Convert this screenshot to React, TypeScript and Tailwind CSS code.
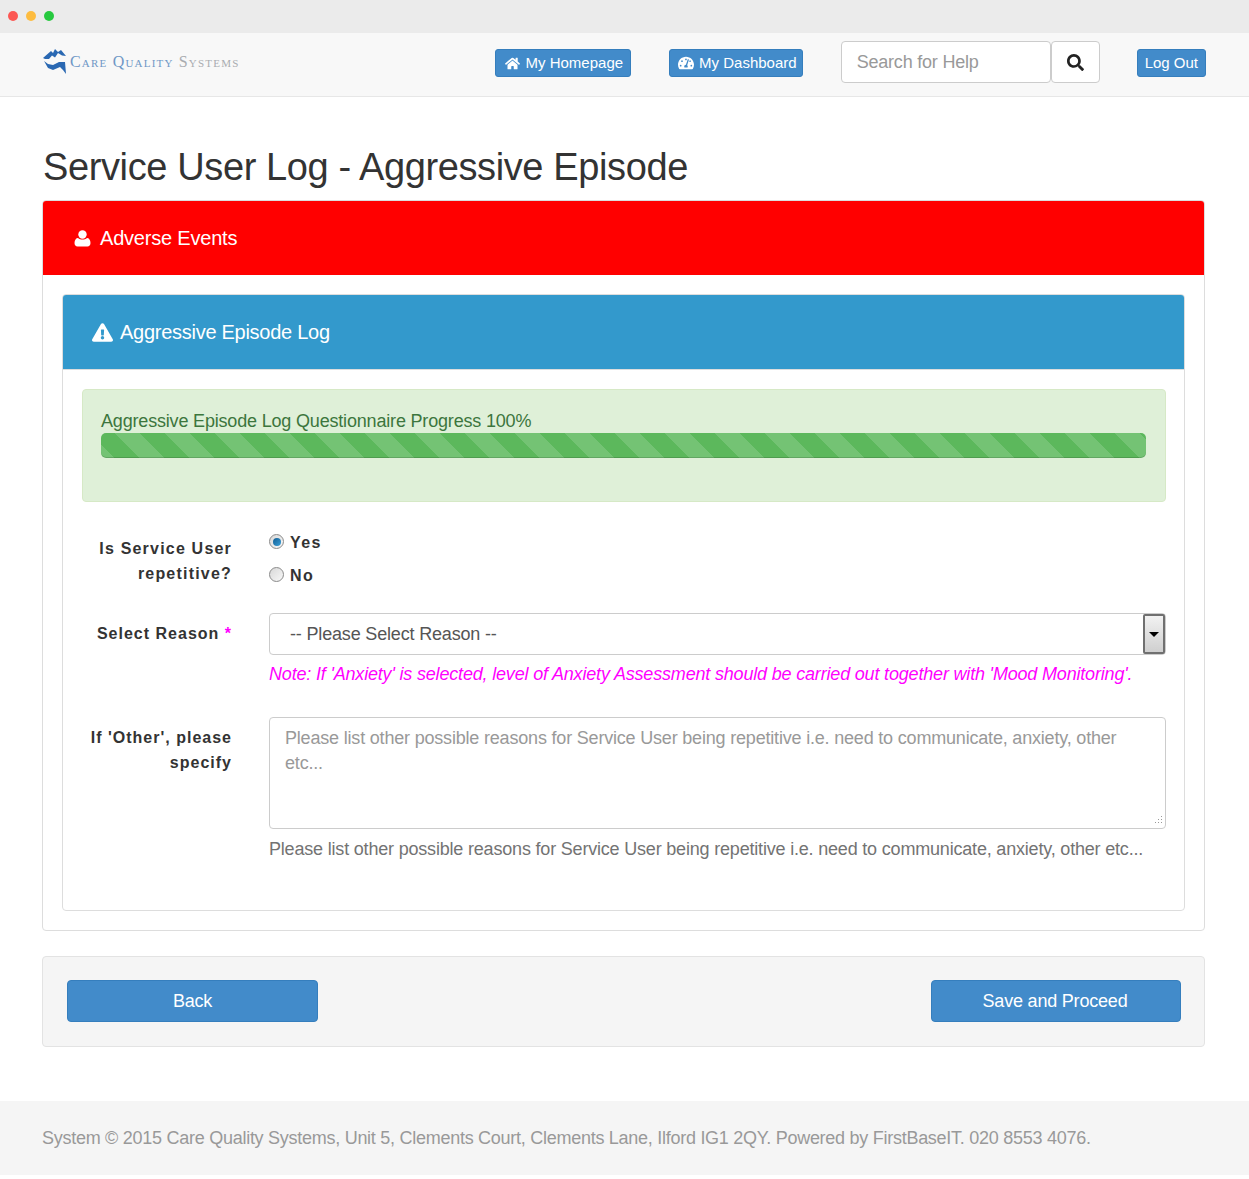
import React from 'react';
import { FaHome, FaTachometerAlt, FaSearch, FaExclamationTriangle } from 'react-icons/fa';

const Logo = () => (
    <div className="flex items-center gap-[3px]">
        <svg width="25" height="28" viewBox="0 0 25 28" className="text-[#2a68b2]">
            <path fill="currentColor" d="M1 10 L9 3 L11 5 L13 1 L16 4 L19 2 L24 8 L20 7.500 L16 5 L13 9.500 L10 7.500 L7 11 L3 11 Z" />
            <path fill="currentColor" d="M2 13 L6 16 L11 17 L17 14 L23 14 L24 26 L21 22 L18 19 L11 22 L6 20 Z" />
        </svg>
        <span className="font-['Liberation_Serif',serif] text-[16px] [font-variant:small-caps] tracking-[1.2px] text-[#6f97c6] whitespace-nowrap">
            Care Quality <span className="text-[#a9acb0]">Systems</span>
        </span>
    </div>
);

const UserIcon = () => (
    <svg width="17" height="17" viewBox="0 0 17 17" fill="currentColor">
        <circle cx="8.500" cy="4.500" r="4.200" />
        <path d="M0.500 13c0-3 1.500-5 3.500-5 1.200 1 2.800 1.500 4.500 1.500S11.800 9 13 8c2 0 3.500 2 3.500 5 0 2.200-1.300 3.500-3 3.500h-10c-1.700 0-3-1.300-3-3.500z" />
    </svg>
);

const Radio = ({ checked, label }: { checked?: boolean; label: string }) => (
    <label className="flex items-center gap-[6px] h-[33px]">
        <span className="w-[15px] h-[15px] -mt-[2px] rounded-full border border-[#8a8a8a] bg-gradient-to-br from-[#d8d8d8] to-[#f8f8f8] flex items-center justify-center">
            {checked && <span className="w-[8px] h-[8px] rounded-full bg-gradient-to-br from-[#0f5d94] to-[#3aa0d8]" />}
        </span>
        <span className="text-[#333] font-bold tracking-[1.400px] text-[16px]">{label}</span>
    </label>
);

const FieldLabel = ({ children }: { children: React.ReactNode }) => (
    <div className="w-[150px] text-right font-bold text-[#333] text-[16px] leading-[25px] tracking-[1px] shrink-0">{children}</div>
);

export default function App() {
    return (
        <div className="min-h-[1179px] bg-white font-['Liberation_Sans',Arial,sans-serif] text-[#333]">
            {/* window bar */}
            <div className="h-[33px] bg-[#ebebeb] flex items-center gap-[8px] pl-[8px] pb-[1px]">
                <span className="w-[10px] h-[10px] rounded-full bg-[#fc5753]" />
                <span className="w-[10px] h-[10px] rounded-full bg-[#fdbc40]" />
                <span className="w-[10px] h-[10px] rounded-full bg-[#27c93f]" />
            </div>

            <nav className="h-[64px] bg-[#f8f8f8] border-b border-[#e7e7e7] flex items-center pl-[42px] pr-[43px] pb-[5px]">
                <Logo />
                <div className="ml-auto flex items-center">
                    <button className="mt-[2px] h-[28px] pl-[9px] pr-[7px] flex items-center gap-[6px] bg-[#428bca] border border-[#357ebd] rounded-[3px] text-white text-[15px] whitespace-nowrap">
                        <FaHome className="w-[15px] h-[15px]" />
                        My Homepage
                    </button>
                    <button className="mt-[2px] ml-[38px] h-[28px] pl-[8px] pr-[5px] flex items-center gap-[5px] bg-[#428bca] border border-[#357ebd] rounded-[3px] text-white text-[15px] whitespace-nowrap">
                        <FaTachometerAlt className="w-[16px] h-[16px]" />
                        My Dashboard
                    </button>
                    <div className="ml-[38px] flex items-center">
                        <div className="w-[210px] h-[42px] bg-white border border-[#ccc] rounded-[4px] pl-[15px] flex items-center text-[18px] tracking-[-0.2px] text-[#999]">
                            Search for Help
                        </div>
                        <button className="w-[49px] h-[42px] bg-white border border-[#ccc] rounded-[4px] flex items-center justify-center text-[#222]">
                            <FaSearch className="w-[17px] h-[17px]" />
                        </button>
                    </div>
                    <button className="mt-[2px] ml-[37px] h-[28px] px-[7px] flex items-center bg-[#428bca] border border-[#357ebd] rounded-[3px] text-white text-[15px] whitespace-nowrap">
                        Log Out
                    </button>
                </div>
            </nav>

            <main className="pl-[42px] pr-[44px]">
                <h1 className="pt-[47px] pl-[1px] text-[38px] leading-[46px] tracking-[-0.38px] text-[#333] mb-[10px] whitespace-nowrap">Service User Log - Aggressive Episode</h1>

                <section className="border border-[#ddd] rounded-[4px] overflow-hidden">
                    <div className="h-[74px] bg-[#ff0000] text-white flex items-center pl-[31px] gap-[9px] text-[20px] tracking-[-0.2px]">
                        <UserIcon />
                        Adverse Events
                    </div>
                    <div className="p-[19px]">
                        <section className="border border-[#ddd] rounded-[4px] overflow-hidden">
                            <div className="h-[74px] bg-[#3399cc] text-white flex items-center pl-[29px] gap-[7px] text-[20px] tracking-[-0.27px]">
                                <FaExclamationTriangle className="w-[21px] h-[21px]" />
                                Aggressive Episode Log
                            </div>
                            <div className="pl-[19px] pr-[18px] pt-[19px] pb-[48px] border-t border-[#ddd]">
                                <div className="h-[113px] bg-[#dff0d8] border border-[#d6e9c6] rounded-[4px] pl-[18px] pr-[19px] pt-[20px] text-[#3c763d] text-[18px] leading-[23px] tracking-[-0.18px]">
                                    <div>Aggressive Episode Log Questionnaire Progress 100%</div>
                                    <div className="h-[25px] rounded-[5px] bg-[#5cb85c] bg-[linear-gradient(45deg,rgba(255,255,255,.15)_25%,transparent_25%,transparent_50%,rgba(255,255,255,.15)_50%,rgba(255,255,255,.15)_75%,transparent_75%,transparent)] bg-[length:50px_50px] bg-[position:14px_0] shadow-[inset_0_-1px_0_rgba(0,0,0,.15)]" />
                                </div>

                                <div className="mt-[24px] flex gap-[37px]">
                                    <div className="pt-[10px]">
                                        <div className="w-[150px] text-right font-bold text-[#333] text-[16px] leading-[25px] tracking-[1.200px] shrink-0">Is Service User repetitive?</div>
                                    </div>
                                    <div className="flex-1">
                                        <Radio checked label="Yes" />
                                        <Radio label="No" />
                                    </div>
                                </div>

                                <div className="mt-[21px] flex gap-[37px]">
                                    <div className="pt-[8px]">
                                        <FieldLabel>
                                            Select Reason <span className="text-[#ff00ff]">*</span>
                                        </FieldLabel>
                                    </div>
                                    <div className="flex-1 min-w-0">
                                        <div className="h-[42px] border border-[#ccc] rounded-[4px] flex items-center justify-between pl-[20px] text-[18px] tracking-[-0.17px] text-[#555]">
                                            -- Please Select Reason --
                                            <span className="w-[22px] h-[40px] border-2 border-[#707070] rounded-[2px] bg-gradient-to-b from-[#f2f2f2] to-[#cfcfcf] flex items-center justify-center">
                                                <span className="w-0 h-0 border-x-[5px] border-x-transparent border-t-[5px] border-t-black" />
                                            </span>
                                        </div>
                                        <p className="mt-[8px] italic text-[#ff00ff] text-[18px] leading-[23px] tracking-[-0.18px] whitespace-nowrap">
                                            Note: If 'Anxiety' is selected, level of Anxiety Assessment should be carried out together with 'Mood Monitoring'.
                                        </p>
                                    </div>
                                </div>

                                <div className="mt-[31px] flex gap-[37px]">
                                    <div className="pt-[8px]">
                                        <FieldLabel>If 'Other', please specify</FieldLabel>
                                    </div>
                                    <div className="flex-1 min-w-0">
                                        <div className="relative h-[112px] border border-[#ccc] rounded-[4px] pl-[15px] pr-[30px] pt-[8px] text-[18px] leading-[25px] tracking-[-0.19px] text-[#999]">
                                            Please list other possible reasons for Service User being repetitive i.e. need to communicate, anxiety, other etc...
                                            <svg width="11" height="11" viewBox="0 0 11 11" className="absolute right-[2px] bottom-[2px] text-[#999]">
                                                <path d="M9 1h1v1H9zM6 4h1v1H6zM9 4h1v1H9zM3 7h1v1H3zM6 7h1v1H6zM9 7h1v1H9z" fill="currentColor" />
                                            </svg>
                                        </div>
                                        <p className="mt-[8px] text-[18px] leading-[25px] tracking-[-0.19px] text-[#737373] whitespace-nowrap">
                                            Please list other possible reasons for Service User being repetitive i.e. need to communicate, anxiety, other etc...
                                        </p>
                                    </div>
                                </div>
                            </div>
                        </section>
                    </div>
                </section>

                <div className="mt-[25px] h-[91px] bg-[#f5f5f5] border border-[#e3e3e3] rounded-[4px] flex items-center justify-between pl-[24px] pr-[23px] pb-[2px]">
                    <button className="w-[251px] h-[42px] pt-[2px] bg-[#428bca] border border-[#357ebd] rounded-[4px] text-white text-[18px] tracking-[-0.3px]">Back</button>
                    <button className="w-[250px] h-[42px] pt-[2px] pr-[2px] bg-[#428bca] border border-[#357ebd] rounded-[4px] text-white text-[18px] tracking-[-0.2px]">Save and Proceed</button>
                </div>
            </main>

            <footer className="mt-[54px] h-[74px] bg-[#f5f5f5] flex items-center pl-[42px] text-[18px] tracking-[-0.27px] text-[#999] whitespace-nowrap">
                System © 2015 Care Quality Systems, Unit 5, Clements Court, Clements Lane, Ilford IG1 2QY. Powered by FirstBaseIT. 020 8553 4076.
            </footer>
        </div>
    );
}
